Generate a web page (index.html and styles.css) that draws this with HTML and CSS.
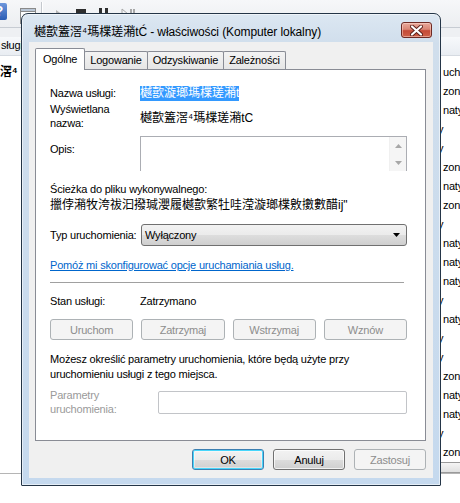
FILE: index.html
```html
<!DOCTYPE html>
<html lang="pl">
<head>
<meta charset="utf-8">
<title>Właściwości usługi</title>
<link rel="stylesheet" href="styles.css">
</head>
<body>
<div class="desktop">
  <div class="mmc">
    <div class="toolbar">
      <span class="tb-help">?</span>
      <svg class="tb-icon" width="16" height="16" viewBox="0 0 16 16"><rect x="0.5" y="0.5" width="15" height="15" fill="#fff" stroke="#8a8a8a"/><rect x="0.5" y="0.5" width="15" height="3" fill="#b9c6d6" stroke="#8a8a8a"/><path d="M3 7h10M3 10h10M3 13h10" stroke="#9a9a9a"/></svg>
      <span class="tb-sep"></span>
      <svg class="tb-icon tb-play" width="10" height="16" viewBox="0 0 10 16"><path d="M1 3l7 5-7 5z" fill="#b5b5b5"/></svg>
      <svg class="tb-icon tb-stop" width="12" height="16" viewBox="0 0 12 16"><rect x="1" y="2" width="10" height="10" fill="#2e2e2e"/></svg>
      <svg class="tb-icon tb-pause" width="12" height="16" viewBox="0 0 12 16"><rect x="1" y="1" width="3" height="11" fill="#2e2e2e"/><rect x="7" y="1" width="3" height="11" fill="#2e2e2e"/></svg>
      <svg class="tb-icon tb-restart" width="14" height="16" viewBox="0 0 14 16"><path d="M1 2l6 5-6 5z" fill="none" stroke="#a8a8a8"/><rect x="9" y="2" width="2" height="10" fill="#a8a8a8"/><rect x="12" y="2" width="2" height="10" fill="#a8a8a8"/></svg>
    </div>
    <div class="pane">
      <div class="list-head">
        <span class="lh-cell">sługi</span>
        <span class="lh-cell"></span>
      </div>
      <div class="list">
        <div class="row"><span class="c-left bold">滘⁴</span><span class="c-right">uch</span></div>
        <div class="row"><span class="c-left"></span><span class="c-right">zony</span></div>
        <div class="row"><span class="c-left"></span><span class="c-right">naty</span></div>
        <div class="row"><span class="c-left"></span><span class="c-right"><span class="tail">y</span></span></div>
        <div class="row"><span class="c-left"></span><span class="c-right"><span class="tail">y</span></span></div>
        <div class="row"><span class="c-left"></span><span class="c-right">zony</span></div>
        <div class="row"><span class="c-left"></span><span class="c-right">naty</span></div>
        <div class="row"><span class="c-left"></span><span class="c-right">zony</span></div>
        <div class="row"><span class="c-left"></span><span class="c-right"><span class="tail">y</span></span></div>
        <div class="row"><span class="c-left"></span><span class="c-right">naty</span></div>
        <div class="row"><span class="c-left"></span><span class="c-right">naty</span></div>
        <div class="row"><span class="c-left"></span><span class="c-right">naty</span></div>
        <div class="row"><span class="c-left"></span><span class="c-right"><span class="tail">y</span></span></div>
        <div class="row"><span class="c-left"></span><span class="c-right">naty</span></div>
        <div class="row"><span class="c-left"></span><span class="c-right"><span class="tail">y</span></span></div>
        <div class="row"><span class="c-left"></span><span class="c-right"><span class="tail">y</span></span></div>
        <div class="row"><span class="c-left"></span><span class="c-right">zony</span></div>
        <div class="row"><span class="c-left"></span><span class="c-right">naty</span></div>
        <div class="row"><span class="c-left"></span><span class="c-right">naty</span></div>
        <div class="row"><span class="c-left"></span><span class="c-right"><span class="tail">y</span></span></div>
        <div class="row"><span class="c-left"></span><span class="c-right">zony</span></div>
      </div>
    </div>
    <div class="hscroll">
      <span class="hs-arrow"><svg width="4" height="7" viewBox="0 0 4 7"><path d="M4 0v7L0 3.5z" fill="#222"/></svg></span>
      <span class="hs-thumb"><span class="grip"></span></span>
    </div>
    <div class="status"><span class="status-tab"></span></div>
  </div>

  <div class="dialog">
    <div class="titlebar">
      <span class="title"><span class="cjk">樾歖篕滘⁴瑪楪瑳潲</span>tĆ - właściwości (Komputer lokalny)</span>
      <button class="close" type="button" aria-label="Zamknij">
        <svg width="13" height="11" viewBox="0 0 13 11"><path d="M2 1.5l9 8M11 1.5l-9 8" stroke="#5a1e18" stroke-width="4" stroke-linecap="round"/><path d="M2 1.5l9 8M11 1.5l-9 8" stroke="#fff" stroke-width="2.2" stroke-linecap="round"/></svg>
      </button>
    </div>
    <div class="client">
      <div class="tabs">
        <span class="tab active">Ogólne</span>
        <span class="tab">Logowanie</span>
        <span class="tab">Odzyskiwanie</span>
        <span class="tab">Zależności</span>
      </div>
      <div class="panel">
        <div class="field f-name">
          <span class="lbl">Nazwa usługi:</span>
          <span class="val"><span class="hl cjk">樾歖漩瑯瑪楪瑳潲t</span></span>
        </div>
        <div class="field f-display">
          <span class="lbl lbl2">Wyświetlana<br>nazwa:</span>
          <span class="val cjk">樾歖篕滘⁴瑪楪瑳潲tC</span>
        </div>
        <div class="field f-desc">
          <span class="lbl lbl-desc">Opis:</span>
          <div class="memo">
            <div class="memo-text"></div>
            <div class="vscroll">
              <svg width="7" height="4" viewBox="0 0 7 4"><path d="M0 4L3.5 0 7 4z" fill="#a7a7a7"/></svg>
              <svg width="7" height="4" viewBox="0 0 7 4"><path d="M0 0L3.5 4 7 0z" fill="#a7a7a7"/></svg>
            </div>
          </div>
        </div>
        <div class="path-lbl">Ścieżka do pliku wykonywalnego:</div>
        <div class="path cjk">擸侼潲牧洿祓汩撥瑊瀴履樾歖繁牡哇滢漩瑯楪敫擻數醋ij"</div>
        <div class="field f-type">
          <span class="lbl">Typ uruchomienia:</span>
          <div class="combo">
            <span>Wyłączony</span>
            <svg width="7" height="4" viewBox="0 0 7 4"><path d="M0 0h7L3.5 4z" fill="#000"/></svg>
          </div>
        </div>
        <a class="link" href="#">Pomóż mi skonfigurować opcje uruchamiania usług.</a>
        <div class="sep"></div>
        <div class="field f-state">
          <span class="lbl">Stan usługi:</span>
          <span class="val">Zatrzymano</span>
        </div>
        <div class="svc-buttons">
          <button class="btn" type="button" disabled>Uruchom</button>
          <button class="btn" type="button" disabled>Zatrzymaj</button>
          <button class="btn" type="button" disabled>Wstrzymaj</button>
          <button class="btn" type="button" disabled>Wznów</button>
        </div>
        <p class="note">Możesz określić parametry uruchomienia, które będą użyte przy<br>uruchomieniu usługi z tego miejsca.</p>
        <div class="field f-params">
          <span class="lbl lbl2 dis">Parametry<br>uruchomienia:</span>
          <div class="input"></div>
        </div>
      </div>
      <div class="buttons">
        <button class="btn default" type="button">OK</button>
        <button class="btn" type="button">Anuluj</button>
        <button class="btn" type="button" disabled>Zastosuj</button>
      </div>
    </div>
  </div>
</div>
</body>
</html>
```

FILE: styles.css
```css
* { box-sizing: border-box; }
html, body { margin: 0; padding: 0; }
body {
  width: 460px;
  height: 503px;
  overflow: hidden;
  background: #fff;
  font-family: "Liberation Sans", "DejaVu Sans", "Noto Sans CJK SC", sans-serif;
  font-size: 11px;
  letter-spacing: -0.2px;
  color: #000;
}
.cjk { font-size: 12px; letter-spacing: 0; font-family: "Liberation Sans", "DejaVu Sans", "Noto Sans CJK SC", sans-serif; }

.desktop { position: relative; width: 460px; height: 503px; overflow: hidden; }

/* background MMC window */
.mmc { display: flex; flex-direction: column; height: 503px; background: #fff; }
.toolbar {
  flex: none;
  height: 28px;
  display: flex;
  align-items: flex-start;
  background: linear-gradient(#f6f7f9, #eceef1);
  border-bottom: 1px solid #c7ccd3;
}
.tb-help {
  margin: 3px 0 0 -9px;
  width: 16px;
  height: 17px;
  border-radius: 2px;
  background: linear-gradient(#6c97dc, #2c5cb4);
  color: #fff;
  font: bold 14px/17px "Liberation Sans", sans-serif;
  letter-spacing: 0;
  text-align: center;
}
.tb-icon { flex: none; margin-top: 7px; }
.toolbar > svg:nth-of-type(1) { margin-left: 13px; margin-top: 8px; }
.tb-sep { width: 1px; height: 24px; margin: 2px 0 0 5px; background: #c4c8ce; box-shadow: 1px 0 0 #fff; }
.tb-play { margin-left: 13px; }
.tb-stop { margin-left: 10px; }
.tb-pause { margin-left: 11px; }
.tb-restart { margin-left: 11px; }

.pane { flex: 1; display: flex; flex-direction: column; padding-top: 9px; background: linear-gradient(#eef0f3 0, #eef0f3 10px, #fff 10px); }
.list-head {
  height: 19px;
  display: grid;
  grid-template-columns: 441px 1fr;
  background: linear-gradient(#f7f9fb, #e9edf2);
  border-bottom: 1px solid #d5dae1;
  line-height: 16px;
}
.lh-cell { padding-left: 1px; overflow: hidden; white-space: nowrap; }
.list { padding-top: 7px; }
.row { display: grid; grid-template-columns: 441px 1fr; height: 19px; line-height: 19px; }
.c-left { white-space: nowrap; overflow: hidden; font-size: 12px; }
.c-right { white-space: nowrap; overflow: hidden; padding-left: 2px; }
.bold { font-weight: bold; }
.tail { display: inline-block; margin-left: -5px; }

.hscroll {
  flex: none;
  height: 12px;
  display: flex;
  padding-left: 170px;
  background: #fff;
  border-bottom: 1px solid #b5b5b5;
}
.hs-arrow { width: 16px; display: flex; align-items: center; justify-content: center; background: linear-gradient(#f2f2f2, #e2e2e2); }
.hs-thumb {
  width: 392px;
  flex: none;
  border: 1px solid #9a9a9a;
  border-radius: 2px;
  background: linear-gradient(#f5f5f5, #e0e0e0);
  display: flex;
  justify-content: center;
  align-items: center;
}
.grip { width: 7px; height: 6px; background: repeating-linear-gradient(90deg, #8c8c8c 0 1px, #fff 1px 3px); }
.status { flex: 1; padding: 2px 0 0 42px; background: #fff; }
.status-tab { display: block; width: 86px; height: 6px; border: 1px solid #9a9a9a; border-bottom: 0; border-radius: 3px 3px 0 0; }

/* dialog window */
.dialog {
  position: absolute;
  left: 21px;
  top: 13px;
  width: 420px;
  height: 473px;
  border: 1px solid #243547;
  border-radius: 7px 7px 1px 1px;
  background: linear-gradient(#dce7f2 0, #d0deec 30px, #c5d9ee 100%);
  box-shadow: inset 0 0 0 1px rgba(255, 255, 255, 0.55);
  display: flex;
  flex-direction: column;
}
.titlebar {
  height: 28px;
  flex: none;
  display: flex;
  justify-content: space-between;
  align-items: flex-start;
  padding: 0 8px 0 12px;
}
.title { font-size: 12px; line-height: 16px; padding-top: 10px; white-space: nowrap; color: #000; letter-spacing: -0.1px; }
.close {
  margin-top: 8px;
  width: 31px;
  height: 16px;
  padding: 0;
  border: 1px solid #6e2a24;
  border-radius: 3px;
  background: linear-gradient(#e9a99b 0%, #d98675 45%, #c54a37 55%, #cf6148 100%);
  box-shadow: inset 0 0 0 1px rgba(255, 220, 210, 0.5);
  display: flex;
  align-items: center;
  justify-content: center;
}
.client {
  flex: none;
  height: 436px;
  margin: 0 7px;
  background: #f0f0f0;
  padding: 0 7px 0 6px;
}
.tabs { height: 27px; display: flex; align-items: flex-end; position: relative; z-index: 1; }
.tab {
  height: 18px;
  padding: 0 5px;
  margin-left: -1px;
  border: 1px solid #898c95;
  border-bottom: 0;
  border-radius: 2px 2px 0 0;
  background: linear-gradient(#f3f3f3, #e6e6e6);
  line-height: 17px;
  white-space: nowrap;
}
.tab.active {
  height: 22px;
  margin-left: 0;
  margin-bottom: -1px;
  padding: 0 7px;
  background: #fff;
  line-height: 21px;
  position: relative;
  z-index: 2;
}
.panel {
  height: 372px;
  background: #fff;
  border: 1px solid #898c95;
  padding: 16px 18px 0 14px;
}
.field { display: grid; grid-template-columns: 90px 1fr; }
.lbl { white-space: nowrap; }
.lbl2 { line-height: 14px; }
.val { white-space: nowrap; }
.f-name { height: 15px; line-height: 15px; }
.hl { display: inline-block; height: 15px; line-height: 15px; background: #3399ff; color: #fff; }
.f-display { margin-top: 1px; }
.f-display .val { align-self: center; }
.f-desc { margin-top: 6px; }
.lbl-desc { padding-top: 6px; line-height: 14px; }
.memo {
  height: 35px;
  border: 1px solid #abadb3;
  border-bottom: 0;
  display: flex;
}
.memo-text { flex: 1; }
.vscroll {
  width: 17px;
  background: #f5f5f5;
  border-left: 1px solid #f0f0f0;
  display: flex;
  flex-direction: column;
  align-items: center;
  padding-top: 7px;
  gap: 13px;
}
.path-lbl { margin-top: 10px; line-height: 16px; }
.path { line-height: 16px; white-space: nowrap; }
.f-type { margin-top: 11px; grid-template-columns: 91px 1fr; align-items: center; }
.combo {
  height: 22px;
  border: 1px solid #707070;
  border-radius: 3px;
  background: linear-gradient(#f2f2f2 0%, #ebebeb 50%, #dddddd 51%, #cfcfcf 100%);
  display: flex;
  align-items: center;
  justify-content: space-between;
  padding: 0 6px 0 3px;
}
.link { display: block; margin-top: 11px; line-height: 16px; color: #0066cc; text-decoration: underline; }
.sep { margin: 9px 3px 0 0; height: 1px; background: #a0a0a0; }
.f-state { margin-top: 10px; line-height: 16px; }
.svc-buttons { margin-top: 10px; display: grid; grid-template-columns: repeat(4, 1fr); gap: 8px; }
.btn {
  height: 21px;
  padding: 0;
  font: inherit;
  letter-spacing: inherit;
  color: #000;
  border: 1px solid #707070;
  border-radius: 3px;
  background: linear-gradient(#f2f2f2 0%, #ebebeb 50%, #dddddd 51%, #cfcfcf 100%);
  box-shadow: inset 0 0 0 1px rgba(255, 255, 255, 0.7);
}
.btn:disabled {
  color: #8d8d8d;
  border-color: #adb2b5;
  background: #f4f4f4;
  box-shadow: none;
}
.btn.default { border-color: #3c7fb1; box-shadow: inset 0 0 0 1px #48d6fb, inset 0 0 0 2px rgba(255,255,255,0.4); }
.note { margin: 12px 0 0; line-height: 15px; white-space: nowrap; }
.f-params { margin-top: 6px; grid-template-columns: 108px 1fr; }
.dis { color: #9a9a9a; }
.input { margin-top: 3px; height: 23px; border: 1px solid #c2c4c8; border-radius: 2px; background: #fff; }
.buttons { display: flex; justify-content: flex-end; gap: 9px; margin-top: 8px; }
.buttons .btn { width: 72px; }
```
